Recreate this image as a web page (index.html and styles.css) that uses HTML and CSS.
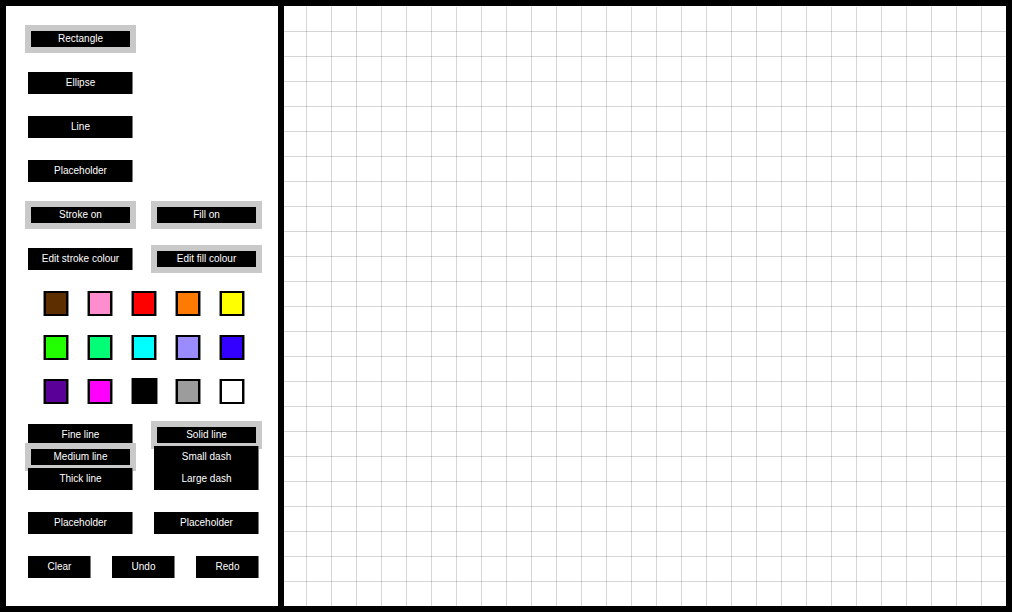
FILE: index.html
```html
<!DOCTYPE html>
<html>
<head>
<meta charset="utf-8">
<link rel="stylesheet" href="styles.css">
</head>
<body>
<div class="app">
  <div class="panel">
    <button class="btn sel">Rectangle</button>
    <button class="btn">Ellipse</button>
    <button class="btn">Line</button>
    <button class="btn">Placeholder</button>
    <div class="pair">
      <button class="btn sel">Stroke on</button>
      <button class="btn sel">Fill on</button>
    </div>
    <div class="pair">
      <button class="btn">Edit stroke colour</button>
      <button class="btn sel">Edit fill colour</button>
    </div>
    <div class="swatches">
      <span class="sw" style="background:#5c2e00"></span>
      <span class="sw" style="background:#ff8ccc"></span>
      <span class="sw" style="background:#ff0000"></span>
      <span class="sw" style="background:#ff7a00"></span>
      <span class="sw" style="background:#ffff00"></span>
      <span class="sw" style="background:#22ff00"></span>
      <span class="sw" style="background:#00ff77"></span>
      <span class="sw" style="background:#00ffff"></span>
      <span class="sw" style="background:#9a8cff"></span>
      <span class="sw" style="background:#3300ff"></span>
      <span class="sw" style="background:#5a0099"></span>
      <span class="sw" style="background:#ff00ff"></span>
      <span class="sw sw-sel" style="background:#000000"></span>
      <span class="sw" style="background:#9c9c9c"></span>
      <span class="sw" style="background:#ffffff"></span>
    </div>
    <div class="pair">
      <div class="stack">
        <button class="btn">Fine line</button>
        <button class="btn sel">Medium line</button>
        <button class="btn">Thick line</button>
      </div>
      <div class="stack">
        <button class="btn sel">Solid line</button>
        <button class="btn">Small dash</button>
        <button class="btn">Large dash</button>
      </div>
    </div>
    <div class="pair">
      <button class="btn">Placeholder</button>
      <button class="btn">Placeholder</button>
    </div>
    <div class="triple">
      <button class="btn">Clear</button>
      <button class="btn">Undo</button>
      <button class="btn">Redo</button>
    </div>
  </div>
  <div class="canvas"></div>
</div>
</body>
</html>
```
FILE: styles.css
```css
html, body {
  margin: 0;
  padding: 0;
  background: #000;
}
body {
  width: 1012px;
  height: 612px;
  overflow: hidden;
  font-family: "Liberation Sans", Arial, sans-serif;
}
.app {
  display: flex;
  gap: 6px;
  padding: 6px;
  height: 612px;
  box-sizing: border-box;
}
.panel {
  width: 272px;
  height: 600px;
  flex: none;
  background: #fff;
  box-sizing: border-box;
  padding: 22px 19px 0 22px;
  display: flex;
  flex-direction: column;
  align-items: flex-start;
  gap: 22px;
}
.btn {
  width: 105px;
  height: 22px;
  padding: 0;
  margin: 0;
  border: 0;
  background: #000;
  color: #fff;
  font-family: "Liberation Sans", Arial, sans-serif;
  font-size: 10px;
  line-height: 22px;
  text-align: center;
  box-shadow: inset -1px 0 0 #7a7a7a;
  display: block;
}
.btn.sel {
  box-shadow: 0 0 0 3px #c9c9c9, inset 0 0 0 3px #c9c9c9;
}
.pair {
  display: grid;
  grid-template-columns: 105px 105px;
  column-gap: 21px;
}
.stack {
  display: flex;
  flex-direction: column;
}
.triple {
  display: grid;
  grid-template-columns: 63px 63px 63px;
  column-gap: 21px;
}
.triple .btn {
  width: 63px;
}
.swatches {
  margin-left: 6px;
  display: grid;
  grid-template-columns: repeat(5, 44px);
  grid-auto-rows: 22px;
  row-gap: 22px;
  justify-items: center;
  align-items: start;
}
.sw {
  display: block;
  width: 24px;
  height: 25px;
  margin-top: -1px;
  box-sizing: border-box;
  border: 2px solid #000;
  box-shadow: -1px 0 0 #8a8a8a, 1px 0 0 #8a8a8a;
}
.sw-sel {
  width: 25px;
  height: 26px;
  margin-top: -2px;
}
.canvas {
  flex: 1;
  height: 600px;
  box-sizing: border-box;
  border-top: 1px solid #fff;
  background-color: #fff;
  background-image:
    linear-gradient(to right, rgba(0,0,0,0.16) 1px, transparent 1px),
    linear-gradient(to bottom, rgba(0,0,0,0.16) 1px, transparent 1px);
  background-size: 25px 25px;
  background-origin: padding-box;
  background-clip: padding-box;
  background-position: 22px -1px, 22px 24px;
}
```
